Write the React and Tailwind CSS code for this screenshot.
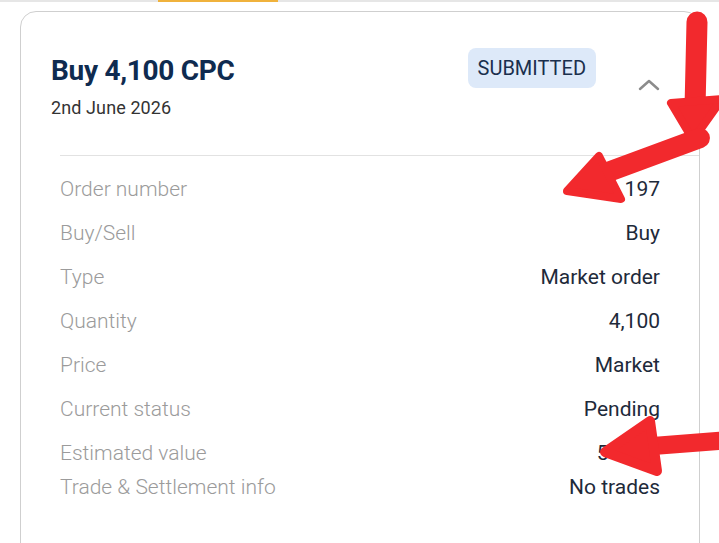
const rows = [
  { label: 'Order number', value: '197', gap: true },
  { label: 'Buy/Sell', value: 'Buy', gap: true },
  { label: 'Type', value: 'Market order', gap: true },
  { label: 'Quantity', value: '4,100', gap: true },
  { label: 'Price', value: 'Market', gap: true },
  { label: 'Current status', value: 'Pending', gap: true },
  { label: 'Estimated value', value: '51,250', gap: false },
  { label: 'Trade & Settlement info', value: 'No trades', gap: false },
]

function Arrows() {
  return (
    <svg className="absolute inset-0 pointer-events-none" width="719" height="543" viewBox="0 0 719 543">
      <g fill="#f2292d" stroke="#f2292d" strokeLinejoin="round" strokeLinecap="round">
        {/* bent arrow, top right */}
        <line x1="697" y1="22" x2="695" y2="108" strokeWidth="21" />
        <polygon points="671,103 722,99 693,140" strokeWidth="8" />
        <line x1="700" y1="138" x2="608" y2="172" strokeWidth="20" />
        <polygon points="567,191 599,156 621,199" strokeWidth="8" />
        {/* arrow at estimated value */}
        <line x1="730" y1="440" x2="640" y2="447" strokeWidth="18" />
        <polygon points="605,452 650,421 657,471" strokeWidth="10" />
      </g>
    </svg>
  )
}

export default function App() {
  return (
    <div className="relative w-[719px] h-[543px] overflow-hidden bg-white" style={{ fontFamily: 'Roboto, sans-serif' }}>
      {/* top strip */}
      <div className="relative h-[2px] bg-[#e6e6e6]">
        <div className="absolute left-[158px] top-0 h-[2px] w-[120px] bg-[#f0b23c]"></div>
      </div>

      {/* Order card */}
      <div className="mt-[9px] ml-[20px] w-[680px] rounded-t-[16px] border border-[#cfcfcf] pb-[80px]">
        {/* Header */}
        <div className="flex items-start justify-between pl-[30px] pr-[39px] pt-[36px]">
          <div className="pt-[6px]">
            <h2 className="text-[28px] leading-[34px] font-bold text-[#0f2b50] tracking-[-0.3px]">Buy 4,100 CPC</h2>
            <p className="mt-[8px] text-[18px] leading-[23px] text-[#333] tracking-[0.1px]">2nd June 2026</p>
          </div>
          <div className="flex items-start gap-[42px]">
            <span className="rounded-[8px] bg-[#dde9f9] px-[10px] h-[40px] flex items-center text-[20px] text-[#1a2f4d]">SUBMITTED</span>
            <svg className="mt-[30px]" width="22" height="14" viewBox="0 0 22 14" fill="none" stroke="#8c8c8c" strokeWidth="2.5" strokeLinecap="round" strokeLinejoin="round">
              <path d="M2 11L11 3l9 8" />
            </svg>
          </div>
        </div>

        {/* Details */}
        <div className="ml-[39px] mt-[36px] border-t border-[#e2e2e2] pt-[16px] pr-[39px]">
          {rows.map((r) => (
            <div key={r.label} className={`flex justify-between leading-[34px] text-[21px] ${r.gap ? 'mb-[10px]' : ''}`}>
              <span className="font-light text-[#9b9b9b]">{r.label}</span>
              <span className="text-[#1e2a3a]">{r.value}</span>
            </div>
          ))}
        </div>
      </div>

      <Arrows />
    </div>
  )
}
